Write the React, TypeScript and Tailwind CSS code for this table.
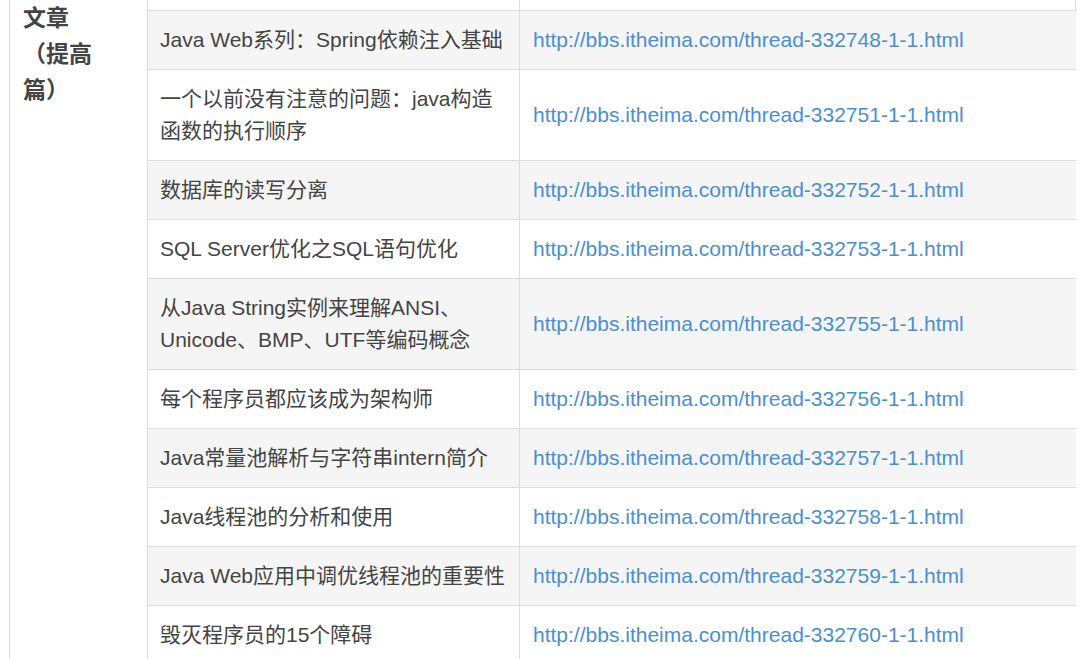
const rows: { title: string[]; id: string }[] = [
  { title: ["Java Web系列：Spring依赖注入基础"], id: "332748" },
  { title: ["一个以前没有注意的问题：java构造", "函数的执行顺序"], id: "332751" },
  { title: ["数据库的读写分离"], id: "332752" },
  { title: ["SQL Server优化之SQL语句优化"], id: "332753" },
  { title: ["从Java String实例来理解ANSI、", "Unicode、BMP、UTF等编码概念"], id: "332755" },
  { title: ["每个程序员都应该成为架构师"], id: "332756" },
  { title: ["Java常量池解析与字符串intern简介"], id: "332757" },
  { title: ["Java线程池的分析和使用"], id: "332758" },
  { title: ["Java Web应用中调优线程池的重要性"], id: "332759" },
  { title: ["毁灭程序员的15个障碍"], id: "332760" },
];

export default function App() {
  return (
    <div className="h-[659px] overflow-hidden bg-white font-['Liberation_Sans','Noto_Sans_CJK_SC',sans-serif] text-[21px] text-[#444]">
      <div className="ml-[9px] flex w-[1067px] border-l border-r border-[#ddd]">
        {/* rowspan category cell */}
        <div className="w-[138px] shrink-0 border-r border-[#ddd] px-[13px] text-[23px] font-bold leading-[36px] text-[#444]">
          <div>文章</div>
          <div>（提高</div>
          <div>篇）</div>
        </div>

        <div className="w-[928px] shrink-0">
          <div className="flex h-[11px] border-b border-[#ddd]">
            <div className="w-[372px] border-r border-[#ddd]" />
            <div className="flex-1" />
          </div>

          {rows.map((r, i) => (
            <div key={r.id} className={`flex border-b border-[#ddd] ${i % 2 === 0 ? "bg-[#f5f5f5]" : "bg-white"}`}>
              <div className="w-[372px] shrink-0 border-r border-[#ddd] px-[12px] py-[13px] leading-[32px] whitespace-nowrap">
                {r.title.map((t) => (
                  <div key={t}>{t}</div>
                ))}
              </div>
              <div className="flex flex-1 items-center px-[13px] leading-[32px]">
                <a href="#" className="text-[#4a8fd3]">
                  http://bbs.itheima.com/thread-{r.id}-1-1.html
                </a>
              </div>
            </div>
          ))}
        </div>
      </div>
    </div>
  );
}
